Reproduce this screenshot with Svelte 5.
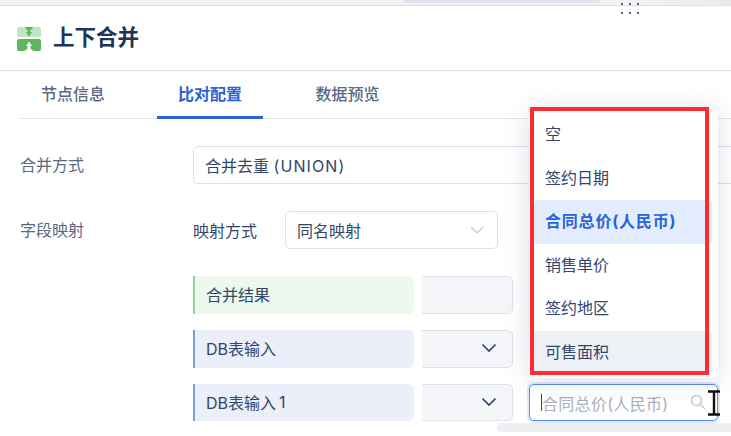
<script>
  const options = [
    { label: '空' },
    { label: '签约日期' },
    { label: '合同总价(人民币)', state: 'selected' },
    { label: '销售单价' },
    { label: '签约地区' },
    { label: '可售面积', state: 'hover' }
  ];
  const tabs = [
    { label: '节点信息' },
    { label: '比对配置', active: true },
    { label: '数据预览' }
  ];
</script>

<div class="page">
  <div class="strip">
    <div class="strip-pill"></div>
  </div>
  <div class="dots" aria-hidden="true">
    {#each Array(6) as _}<i></i>{/each}
  </div>

  <header class="head">
    <svg class="logo" width="24" height="24" viewBox="0 0 24 24">
      <path d="M2 0h20a2 2 0 0 1 2 2v6a2 2 0 0 1-2 2H2a2 2 0 0 1-2-2V2a2 2 0 0 1 2-2z" fill="#bfe6c3" />
      <path d="M8 0h8c-.5 1.500-1.500 2.500-2.500 3V5H15l-3 4.500L9 5h1.500V3C9.500 2.500 8.500 1.500 8 0z" fill="#5cb761" />
      <path d="M2 12h20a2 2 0 0 1 2 2v8a2 2 0 0 1-2 2h-5c-1.500-.5-2.500-1.500-3.500-2.500V19H15l-3-4.500L9 19h1.500v2.500C9.500 22.500 8.500 23.500 7 24H2a2 2 0 0 1-2-2v-8a2 2 0 0 1 2-2z" fill="#5cb761" />
    </svg>
    <h1>上下合并</h1>
  </header>

  <nav class="tabs">
    {#each tabs as tab}
      <span class="tab" class:active={tab.active}>{tab.label}</span>
    {/each}
  </nav>

  <section class="form">
    <div class="row">
      <span class="label">合并方式</span>
      <div class="box merge-box"><span>合并去重 <span class="latin">(UNION)</span></span></div>
    </div>

    <div class="row row-map">
      <span class="label">字段映射</span>
      <div class="map-mode">
        <span class="mode-label">映射方式</span>
        <div class="box mode-box">
          <span>同名映射</span>
          <svg width="14" height="8" viewBox="0 0 14 8" fill="none" stroke="#c3c8d4" stroke-width="1.200"><path d="M1 1l6 6 6-6" /></svg>
        </div>
      </div>
    </div>

    <div class="maps">
      <div class="stack">
        <div class="under"></div>
        <div class="tagwrap"><div class="tag green">合并结果</div></div>
      </div>
      <div></div>

      <div class="stack">
        <div class="under">
          <svg width="16" height="10" viewBox="0 0 16 10" fill="none" stroke="#2f4263" stroke-width="1.600"><path d="M1.500 1.500L8 8l6.500-6.500" /></svg>
        </div>
        <div class="tagwrap"><div class="tag blue">DB表输入</div></div>
      </div>
      <div></div>

      <div class="stack short">
        <div class="under">
          <svg width="16" height="10" viewBox="0 0 16 10" fill="none" stroke="#2f4263" stroke-width="1.600"><path d="M1.500 1.500L8 8l6.500-6.500" /></svg>
        </div>
        <div class="tagwrap"><div class="tag blue">DB表输入<span class="one">1</span></div></div>
      </div>
      <div class="search short">
        <span class="caret"></span>
        <span class="placeholder">合同总价(人民币)</span>
        <svg class="glass" width="16" height="16" viewBox="0 0 16 16" fill="none" stroke="#c6cad2" stroke-width="1.600"><circle cx="6.500" cy="6.500" r="5" /><path d="M10.300 10.300L15 15" /></svg>

        <ul class="menu">
          {#each options as o}
            <li class:selected={o.state === 'selected'} class:hover={o.state === 'hover'}>{o.label}</li>
          {/each}
          <div class="redbox"></div>
        </ul>

        <svg class="ibeam" width="14" height="26" viewBox="0 0 14 26" fill="none">
          <path d="M1 1.500h12M1 24.500h12M7 1.500v23" stroke="#111" stroke-width="2.400" />
        </svg>
      </div>
    </div>
  </section>

  <div class="hbar"></div>
</div>

<style>
  :global(body) {
    margin: 0;
    background: #fff;
  }
  .page {
    position: relative;
    width: 731px;
    height: 436px;
    overflow: hidden;
    background: #fff;
    font-family: Inter, "Noto Sans CJK SC", sans-serif;
    color: #2a3b5c;
    font-size: 16px;
  }
  .strip {
    height: 5px;
    background: linear-gradient(90deg, #f2f3f7 0 85%, #e9ebef 100%);
    border-bottom: 1px solid #dfe1ea;
    padding-left: 403px;
  }
  .strip-pill {
    width: 197px;
    height: 3px;
    background: #e1e3ec;
    border-radius: 0 0 4px 4px;
  }
  .dots {
    position: absolute;
    left: 621px;
    top: 3px;
    display: grid;
    grid-template-columns: repeat(3, 2px);
    column-gap: 6px;
    row-gap: 7px;
  }
  .dots i {
    width: 2px;
    height: 2px;
    background: #56607c;
  }
  .head {
    height: 64px;
    display: flex;
    align-items: center;
    gap: 12px;
    padding-left: 17px;
    border-bottom: 1px solid #dddfe8;
  }
  .logo {
    flex: none;
    margin-top: 1px;
  }
  h1 {
    margin: -1px 0 0;
    font-size: 21.500px;
    line-height: 1;
    font-weight: 700;
    color: #20345a;
  }
  .tabs {
    margin-left: 20px;
    height: 47px;
    display: flex;
    gap: 31.500px;
    border-bottom: 1px solid #e4e6ee;
  }
  .tab {
    height: 47px;
    box-sizing: border-box;
    display: flex;
    align-items: center;
    padding: 0 21px 3px;
    color: #5b6880;
    font-weight: 500;
  }
  .tab:nth-child(2) {
    margin-left: -0.500px;
  }
  .tab.active {
    height: 48px;
    padding-bottom: 2px;
    color: #2a62dc;
    font-weight: 700;
    border-bottom: 3px solid #2a62dc;
  }
  .form {
    padding-left: 20px;
    padding-top: 27px;
  }
  .row {
    display: grid;
    grid-template-columns: 173px 1fr;
    align-items: center;
  }
  .label {
    color: #5b6880;
    padding-bottom: 2px;
  }
  .box {
    height: 38px;
    box-sizing: border-box;
    border: 1px solid #dcdfeb;
    border-radius: 5px;
    background: #fff;
    display: flex;
    align-items: center;
    padding: 0 11px 1px;
    color: #33466a;
  }
  .latin {
    letter-spacing: 1.100px;
  }
  .merge-box {
    width: 640px;
  }
  .row-map {
    margin-top: 27px;
  }
  .map-mode {
    display: flex;
    align-items: center;
  }
  .mode-label {
    width: 92px;
    color: #33466a;
  }
  .mode-box {
    width: 213px;
    justify-content: space-between;
    padding-right: 13px;
  }
  .maps {
    margin-left: 173px;
    margin-top: 27px;
    display: grid;
    grid-template-columns: 320px 189px;
    column-gap: 16px;
    row-gap: 16px;
    grid-auto-rows: 38px;
  }
  .stack {
    display: grid;
    height: 38px;
  }
  .stack > * {
    grid-area: 1 / 1;
  }
  .short {
    height: 37px;
  }
  .under {
    box-sizing: border-box;
    border: 1px solid #dfe2ec;
    border-radius: 5px;
    background: #f5f6fa;
    display: flex;
    align-items: center;
    justify-content: flex-end;
    padding-right: 15px;
  }
  .under svg {
    margin-top: -2px;
  }
  .tagwrap {
    width: 229px;
    box-sizing: border-box;
    padding-right: 8px;
    background: #fff;
    display: flex;
  }
  .tag {
    flex: 1;
    box-sizing: border-box;
    display: flex;
    align-items: center;
    padding: 0 0 2px 11px;
    border-left: 2px solid;
    border-radius: 0 6px 6px 0;
    color: #33466a;
  }
  .tag.green {
    background: #edf8ef;
    border-left-color: #8fd398;
  }
  .tag.blue {
    background: #eaeffa;
    border-left-color: #7d9ee0;
  }
  .one {
    margin-left: 3px;
  }
  .search {
    position: relative;
    box-sizing: border-box;
    border: 1px solid #5b8bea;
    border-radius: 5px;
    box-shadow: 0 0 0 2px #dfe7f8;
    background: #fff;
    display: flex;
    align-items: center;
    padding-left: 11px;
  }
  .caret {
    width: 1px;
    height: 17px;
    background: #33466a;
    flex: none;
  }
  .placeholder {
    color: #a9aeba;
    letter-spacing: 0.300px;
  }
  .glass {
    position: absolute;
    right: 11px;
    top: 9px;
  }
  .ibeam {
    position: absolute;
    left: 177px;
    top: 5px;
  }
  .menu {
    position: absolute;
    left: -1px;
    right: -1px;
    bottom: calc(100% + 7px);
    margin: 0;
    list-style: none;
    box-sizing: border-box;
    padding: 4px 6px 4px 5px;
    background: #fff;
    border-radius: 6px;
    box-shadow: 0 2px 26px rgba(40, 50, 80, 0.16);
  }
  .menu li {
    height: 43.500px;
    box-sizing: border-box;
    display: flex;
    align-items: center;
    padding: 0 0 3px 11px;
    border-radius: 4px;
    color: #33466a;
  }
  .menu li.selected {
    background: #e4edfd;
    color: #2a62dc;
    font-weight: 700;
    letter-spacing: 0.800px;
    padding-left: 11px;
  }
  .menu li.hover {
    background: #edf0f5;
  }
  .redbox {
    position: absolute;
    left: 1px;
    top: -2px;
    width: 179px;
    height: 268px;
    box-sizing: border-box;
    border: 4px solid #ff2a32;
    pointer-events: none;
  }
  .hbar {
    position: absolute;
    left: 497px;
    right: 0;
    top: 423px;
    height: 9px;
    border-radius: 5px 0 0 5px;
    background: #eeeff3;
  }
</style>
